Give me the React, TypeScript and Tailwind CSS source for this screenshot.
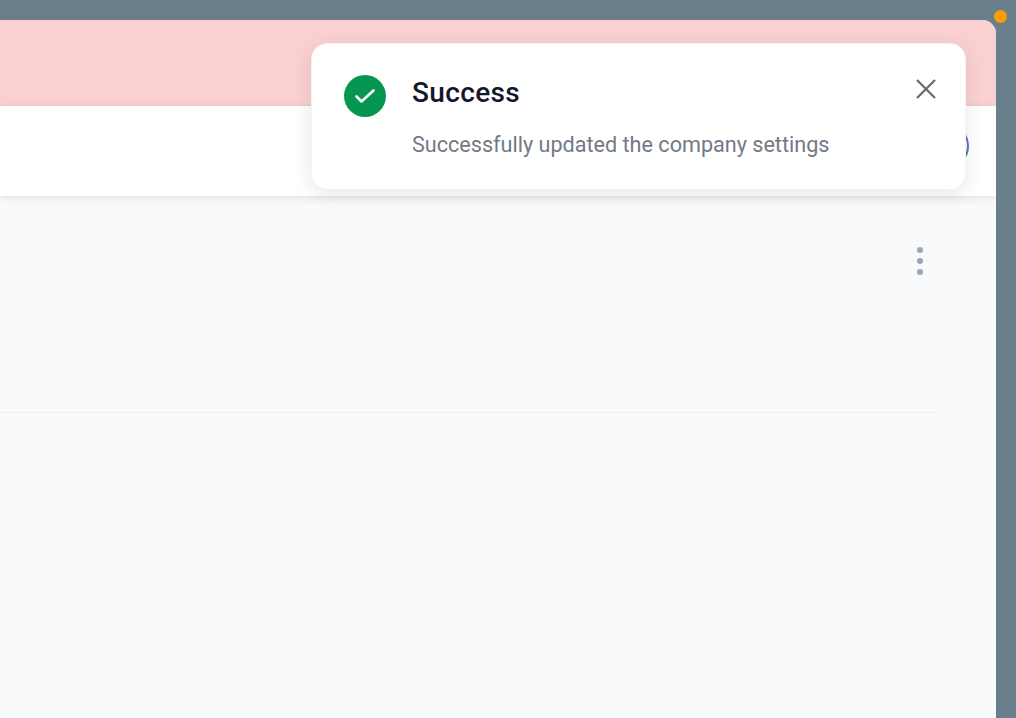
import React from 'react';

const App: React.FC = () => {
  return (
    <div className="relative h-[718px] w-[1016px] overflow-hidden bg-[#6a7f8c] pt-5 font-['Roboto',sans-serif]">
      {/* Notification dot */}
      <span className="absolute left-[994px] top-[10px] h-[13px] w-[13px] rounded-full bg-[#ff9a00]" />

      {/* App window */}
      <div className="flex h-[698px] w-[996px] flex-col overflow-hidden rounded-tr-[14px] bg-[#f9fafc]">
        <div className="h-[86px] shrink-0 bg-[#fad1d0]" />
        <div className="relative z-10 flex h-[90px] shrink-0 items-start justify-end bg-white pr-[27px] pt-[17px] shadow-[0_2px_8px_rgba(0,0,0,0.1)]">
          <span className="h-[46px] w-[46px] rounded-full border-2 border-[#5f78b8]" />
        </div>
        <div className="flex h-[216px] shrink-0 justify-end pr-[58px] pt-[50px]">
          <button className="flex h-[30px] w-[36px] flex-col items-center justify-between py-[1px]">
            <span className="h-[6px] w-[6px] rounded-full bg-[#9ca3b4]" />
            <span className="h-[6px] w-[6px] rounded-full bg-[#9ca3b4]" />
            <span className="h-[6px] w-[6px] rounded-full bg-[#9ca3b4]" />
          </button>
        </div>
        <div className="mr-[58px] h-px bg-[#eff0f3]" />
      </div>

      {/* Toast */}
      <div className="absolute left-[311px] top-[43px] z-20 flex h-[147px] w-[655px] items-start rounded-[16px] border border-[#f3f4f6] bg-white pl-[32px] pr-[27px] pt-[31px] shadow-[0_4px_20px_rgba(0,0,0,0.1)]">
        <span className="flex h-[42px] w-[42px] shrink-0 items-center justify-center rounded-full bg-[#059652]">
          <svg width="24" height="24" viewBox="0 0 24 24" fill="none" stroke="white" strokeWidth="2.6" strokeLinecap="round" strokeLinejoin="round">
            <path d="M3.5 12.5l5 5L20.5 6.5" />
          </svg>
        </span>
        <div className="ml-[26px] flex-1">
          <div className="mt-px text-[28px] font-medium leading-[34px] tracking-[0.35px] text-[#111827]">Success</div>
          <div className="mt-[21px] text-[21.6px] leading-[28px] text-[#737985]">Successfully updated the company settings</div>
        </div>
        <svg width="24" height="24" viewBox="0 0 24 24" fill="none" stroke="#666a6d" strokeWidth="2.2" className="mt-[2px] shrink-0">
          <path d="M3 3l18 18M21 3L3 21" />
        </svg>
      </div>
    </div>
  );
};

export default App;
